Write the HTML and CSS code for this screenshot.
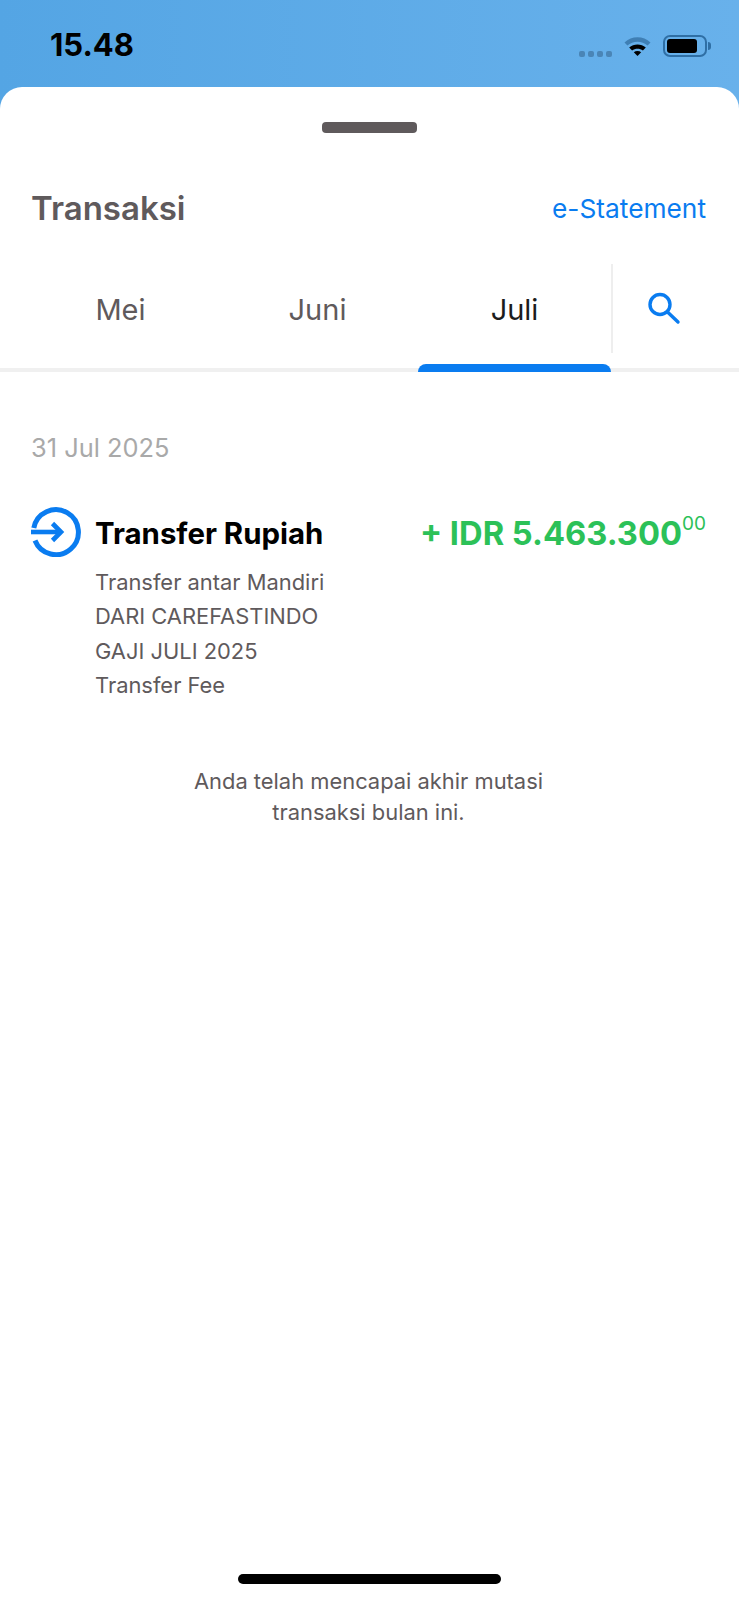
FILE: index.html
```html
<!DOCTYPE html>
<html lang="id">
<head>
<meta charset="utf-8">
<title>Transaksi</title>
<link rel="stylesheet" href="styles.css">
</head>
<body>
<div class="screen">
  <header class="status">
    <span class="time">15.48</span>
    <div class="status-icons">
      <div class="dots"><i></i><i></i><i></i><i></i></div>
      <svg class="wifi" width="29" height="21" viewBox="0 0 29 21">
        <path d="M1.5 7.5C8.5 .5 20.5 .5 27.5 7.5L24.6 10.6C19 5.4 10 5.4 4.4 10.6Z" fill="#3f7fb4"/>
        <path d="M6.2 12.6C10.8 8.4 18.2 8.4 22.8 12.6L19.9 15.6C16.8 13 12.2 13 9.1 15.6Z" fill="#000"/>
        <path d="M10.8 17.2C12.8 15.6 16.2 15.6 18.2 17.2L14.5 21Z" fill="#000"/>
      </svg>
      <div class="battery"><div class="battery-fill"></div></div>
      <div class="battery-nub"></div>
    </div>
  </header>
  <main class="sheet">
    <div class="handle"></div>
    <div class="sheet-head">
      <h1 class="title">Transaksi</h1>
      <a class="statement">e-Statement</a>
    </div>
    <nav class="tabs">
      <div class="tab">Mei</div>
      <div class="tab">Juni</div>
      <div class="tab tab-active">Juli</div>
      <div class="tab-search">
        <svg width="36" height="36" viewBox="0 0 36 36" fill="none" stroke="#0a7cf0" stroke-width="3.4" stroke-linecap="round">
          <circle cx="15" cy="14.5" r="10"/>
          <path d="M22.5 22L33 32"/>
        </svg>
      </div>
    </nav>
    <section class="content">
      <div class="date">31 Jul 2025</div>
      <article class="trx">
        <svg class="trx-icon" width="50" height="50" viewBox="0 0 50 50" fill="none" stroke="#0a7cf0" stroke-width="5">
          <path d="M2.8 21A22.5 22.5 0 1 1 4 33.5"/>
          <path d="M0 25H30" stroke-width="4.6"/>
          <path d="M21.5 16.5L30 25L21.5 33.5" stroke-width="4.6"/>
        </svg>
        <div class="trx-body">
          <div class="trx-top">
            <span class="trx-name">Transfer Rupiah</span>
            <span class="trx-amount">+ IDR 5.463.300<sup class="cents">00</sup></span>
          </div>
          <div class="trx-desc">
            <div>Transfer antar Mandiri</div>
            <div>DARI CAREFASTINDO</div>
            <div>GAJI JULI 2025</div>
            <div>Transfer Fee</div>
          </div>
        </div>
      </article>
      <p class="end-note">Anda telah mencapai akhir mutasi<br>transaksi bulan ini.</p>
    </section>
    <div class="home-bar"></div>
  </main>
</div>
</body>
</html>
```
FILE: styles.css
```css
* { box-sizing: border-box; }
html, body { margin: 0; padding: 0; }
body { font-family: Inter, "Noto Sans", sans-serif; background: #fff; }
.screen { width: 739px; height: 1600px; display: flex; flex-direction: column; overflow: hidden; background: linear-gradient(90deg, #54a5e4, #68b1eb); }
.status { height: 87px; flex: none; display: flex; justify-content: space-between; align-items: flex-start; padding: 27px 28px 0 50px; }
.time { font-family: Inter, sans-serif; font-weight: 700; font-size: 31px; line-height: 36px; color: #000; }
.status-icons { display: flex; align-items: center; padding-top: 7px; }
.dots { display: flex; gap: 3px; margin-right: 11px; padding-top: 17px; }
.dots i { width: 6px; height: 6px; border-radius: 2px; background: #4a85b6; }
.wifi { margin-right: 11px; }
.battery { width: 44px; height: 22px; border: 2px solid #2f6fa5; border-radius: 7px; padding: 2px; }
.battery-fill { width: 30px; height: 14px; background: #000; border-radius: 3px; }
.battery-nub { width: 3px; height: 8px; background: #2f6fa5; border-radius: 0 3px 3px 0; margin-left: 1px; }
.sheet { flex: 1; background: #fff; border-radius: 22px 22px 0 0; display: flex; flex-direction: column; }
.handle { width: 95px; height: 11px; background: #5f5a5c; border-radius: 4px; margin: 35px auto 0; flex: none; }
.sheet-head { display: flex; justify-content: space-between; align-items: center; padding: 0 33px 0 31px; margin-top: 54px; height: 42px; }
.title { margin: 0; font-size: 33px; font-weight: 600; color: #5f5a5c; }
.statement { font-size: 26.3px; color: #0a7cf0; }
.tabs { display: flex; margin-top: 35px; height: 108px; padding: 0 0 15px 22px; border-bottom: 4px solid #f0f0f0; position: relative; }
.tab { width: 197px; display: flex; align-items: center; justify-content: center; padding-top: 2px; font-size: 29px; color: #5f5a5c; position: relative; }
.tab-active { color: #1c1c1c; }
.tab-active::after { content: ""; position: absolute; left: 2px; right: 2px; bottom: -19px; height: 8px; background: #0a7cf0; border-radius: 8px 8px 0 0; }
.tab-search { flex: 1; display: flex; align-items: center; justify-content: center; border-left: 2px solid #eee; margin-left: -2px; padding: 0 27px 2px 0; }
.content { padding: 0 33px 0 31px; flex: 1; }
.date { font-size: 25.4px; color: #a9a9a9; margin-top: 60px; line-height: 32px; }
.trx { display: flex; align-items: flex-start; margin-top: 43px; }
.trx-icon { flex: none; margin-right: 14px; }
.trx-body { flex: 1; }
.trx-top { display: flex; justify-content: space-between; align-items: center; height: 50px; padding-top: 2px; }
.trx-name { font-size: 29.4px; font-weight: 700; color: #000; }
.trx-amount { font-size: 32.7px; font-weight: 700; color: #2cc158; }
.cents { font-size: 19px; font-weight: 400; line-height: 0; vertical-align: 15px; }
.trx-desc { margin-top: 8px; font-size: 21.9px; line-height: 34.4px; color: #5f5a5c; }
.end-note { margin: 63px 0 0; text-align: center; font-size: 21.9px; line-height: 31px; color: #5f5a5c; }
.home-bar { width: 263px; height: 10px; background: #000; border-radius: 5px; margin: 0 auto 16px; flex: none; }
```
